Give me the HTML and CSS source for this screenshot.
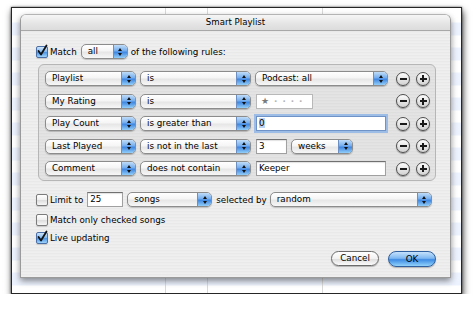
FILE: index.html
```html
<!DOCTYPE html>
<html lang="en">
<head>
    <meta charset="UTF-8">
    <title>Smart Playlist</title>
    <link rel="stylesheet" href="styles.css">
</head>
<body>
    <div class="window">
        <div class="sheet">
            <div class="titlebar">Smart Playlist</div>

            <div class="sheet-body">
                <div class="match-row">
                    <span class="check on"><svg viewBox="0 0 12 12" width="12" height="12"><path d="M2.5 6 L5 9.5 L10.5 0.5" /></svg></span>
                    <span class="label">Match</span>
                    <div class="popup w-all"><span class="popup-text">all</span><span class="popup-arrows"></span></div>
                    <span class="label after-popup">of the following rules:</span>
                </div>

                <div class="rules">
                    <div class="rule">
                        <div class="popup w-field"><span class="popup-text">Playlist</span><span class="popup-arrows"></span></div>
                        <div class="popup w-op"><span class="popup-text">is</span><span class="popup-arrows"></span></div>
                        <div class="value">
                            <div class="popup w-value"><span class="popup-text">Podcast: all</span><span class="popup-arrows"></span></div>
                        </div>
                        <div class="pm"><span class="round minus"></span><span class="round plus"></span></div>
                    </div>

                    <div class="rule">
                        <div class="popup w-field"><span class="popup-text">My Rating</span><span class="popup-arrows"></span></div>
                        <div class="popup w-op"><span class="popup-text">is</span><span class="popup-arrows"></span></div>
                        <div class="value">
                            <div class="rating"><span class="star">★</span><span class="dot">·</span><span class="dot">·</span><span class="dot">·</span><span class="dot">·</span></div>
                        </div>
                        <div class="pm"><span class="round minus"></span><span class="round plus"></span></div>
                    </div>

                    <div class="rule">
                        <div class="popup w-field"><span class="popup-text">Play Count</span><span class="popup-arrows"></span></div>
                        <div class="popup w-op"><span class="popup-text">is greater than</span><span class="popup-arrows"></span></div>
                        <div class="value">
                            <div class="field wide focused"><span class="selected">0</span></div>
                        </div>
                        <div class="pm"><span class="round minus"></span><span class="round plus"></span></div>
                    </div>

                    <div class="rule">
                        <div class="popup w-field"><span class="popup-text">Last Played</span><span class="popup-arrows"></span></div>
                        <div class="popup w-op"><span class="popup-text">is not in the last</span><span class="popup-arrows"></span></div>
                        <div class="value">
                            <div class="field short">3</div>
                            <div class="popup w-unit"><span class="popup-text">weeks</span><span class="popup-arrows"></span></div>
                        </div>
                        <div class="pm"><span class="round minus"></span><span class="round plus"></span></div>
                    </div>

                    <div class="rule">
                        <div class="popup w-field"><span class="popup-text">Comment</span><span class="popup-arrows"></span></div>
                        <div class="popup w-op"><span class="popup-text">does not contain</span><span class="popup-arrows"></span></div>
                        <div class="value">
                            <div class="field wide">Keeper</div>
                        </div>
                        <div class="pm"><span class="round minus"></span><span class="round plus"></span></div>
                    </div>
                </div>

                <div class="limit-row">
                    <span class="check"></span>
                    <span class="label">Limit to</span>
                    <div class="field limit">25</div>
                    <div class="popup w-songs"><span class="popup-text">songs</span><span class="popup-arrows"></span></div>
                    <span class="label sel-by">selected by</span>
                    <div class="popup w-random"><span class="popup-text">random</span><span class="popup-arrows"></span></div>
                </div>

                <div class="option-row first">
                    <span class="check"></span>
                    <span class="label">Match only checked songs</span>
                </div>

                <div class="option-row">
                    <span class="check on"><svg viewBox="0 0 12 12" width="12" height="12"><path d="M2.5 6 L5 9.5 L10.5 0.5" /></svg></span>
                    <span class="label">Live updating</span>
                </div>

                <div class="buttons">
                    <div class="btn">Cancel</div>
                    <div class="btn default">OK</div>
                </div>
            </div>
        </div>
    </div>
</body>
</html>
```

FILE: styles.css
```css
body {
    margin: 0;
    padding: 7px 0 0 11px;
    background: #fff;
    font-family: "DejaVu Sans", "Liberation Sans", sans-serif;
    font-size: 8.75px;
    color: #000;
}

/* iTunes window behind the sheet */
.window {
    width: 451px;
    height: 287px;
    box-sizing: border-box;
    border: 1px solid #262626;
    padding: 6px 0 0 8px;
    box-shadow: 1px 4px 7px rgba(0, 0, 0, 0.75), 0 0 2px rgba(0, 0, 0, 0.6);
    background:
        linear-gradient(#d9d9d9, #d9d9d9) 153px 0 / 1px 100% no-repeat,
        linear-gradient(#d9d9d9, #d9d9d9) 195px 0 / 1px 100% no-repeat,
        linear-gradient(#d9d9d9, #d9d9d9) 310px 0 / 1px 100% no-repeat,
        repeating-linear-gradient(#fff 0 12.5px, #edf3fe 12.5px 25px) 0 2.5px;
}

.sheet {
    width: 431px;
    height: 264px;
    box-sizing: border-box;
    border: 1px solid #9a9a9a;
    border-top-color: #b4b4b4;
    border-radius: 6px 6px 0 0;
    background: repeating-linear-gradient(#efefef 0 1px, #e9e9e9 1px 2px, #ededed 2px 3px);
    box-shadow: 0 3px 6px rgba(0, 0, 0, 0.45);
}

.titlebar {
    height: 15px;
    line-height: 15px;
    text-align: center;
    font-size: 8.6px;
    background: linear-gradient(#f6f6f6, #e4e4e4 60%, #dcdcdc);
    border-bottom: 1px solid #a8a8a8;
    border-radius: 5px 5px 0 0;
}

.sheet-body {
    padding: 13px 14px 0 15px;
}

.label {
    white-space: nowrap;
    margin-left: 2px;
}

/* match row */
.match-row,
.limit-row {
    display: flex;
    align-items: center;
    height: 15px;
}

.match-row .w-all {
    margin-left: 4px;
}

.after-popup {
    margin-left: 3px;
}

/* checkboxes */
.check {
    width: 12px;
    height: 12px;
    flex: none;
    box-sizing: border-box;
    border: 1px solid #7b7b7b;
    border-radius: 2px;
    background: linear-gradient(#fff, #eeeeee 50%, #dcdcdc 52%, #f7f7f7);
    box-shadow: 0 1px 1px rgba(0, 0, 0, 0.15);
    display: flex;
}

.check.on {
    border-color: #4a6ea6;
    background: linear-gradient(#cfe5fb, #7fb7ef 48%, #4a92e4 52%, #9ed4fb);
}

.check svg {
    margin: -2px 0 0 -1px;
    overflow: visible;
}

.check path {
    fill: none;
    stroke: #111;
    stroke-width: 1.8;
    stroke-linecap: round;
    stroke-linejoin: round;
}

/* popup menus */
.popup {
    display: flex;
    flex: none;
    height: 15px;
    box-sizing: border-box;
    border: 1px solid #8c8c8c;
    border-radius: 5px;
    overflow: hidden;
    background: linear-gradient(#fff, #f5f5f5 45%, #e6e6e6 55%, #f7f7f7);
    box-shadow: 0 1px 1px rgba(0, 0, 0, 0.2);
}

.popup-text {
    flex: 1;
    padding-left: 6px;
    line-height: 13px;
    white-space: nowrap;
}

.popup-arrows {
    width: 13px;
    border-left: 1px solid #6b8fc3;
    background: linear-gradient(#c0dcf8, #74adee 45%, #3f86e0 55%, #92cdf9);
    display: flex;
    flex-direction: column;
    align-items: center;
    justify-content: center;
    gap: 2px;
}

.popup-arrows::before,
.popup-arrows::after {
    content: "";
    border-left: 2.5px solid transparent;
    border-right: 2.5px solid transparent;
}

.popup-arrows::before {
    border-bottom: 3px solid #111;
}

.popup-arrows::after {
    border-top: 3px solid #111;
}

.w-all { width: 47px; }
.w-field { width: 91px; }
.w-op { width: 111px; margin-left: 4px; }
.w-value { width: 133px; }
.w-unit { width: 62px; margin-left: 4px; }
.w-songs { width: 85px; margin-left: 4px; }
.w-random { width: 162px; margin-left: 3px; }

/* rules box */
.rules {
    width: 398px;
    height: 117px;
    box-sizing: border-box;
    margin: 5px 0 0 2px;
    padding: 6px 5px 0 6px;
    border: 1px solid #b6b6b6;
    border-radius: 6px;
    background: rgba(0, 0, 0, 0.045);
    display: flex;
    flex-direction: column;
    gap: 7.5px;
}

.rule {
    display: flex;
    align-items: center;
    height: 15px;
}

.value {
    width: 133px;
    margin-left: 4px;
    display: flex;
    align-items: center;
}

/* text fields */
.field {
    height: 15px;
    box-sizing: border-box;
    border: 1px solid #a0a0a0;
    border-top-color: #707070;
    background: #fff;
    box-shadow: inset 0 1px 1px rgba(0, 0, 0, 0.12);
    padding-left: 2px;
    line-height: 13px;
    white-space: nowrap;
}

.field.wide {
    width: 130px;
    margin-left: 1px;
}

.field.short {
    width: 31px;
    margin-left: 1px;
}

.field.limit {
    width: 36px;
    margin-left: 4px;
}

.field.focused {
    border-color: #6f93c6;
    box-shadow: 0 0 0 2px #9dbde6;
}

.selected {
    background: #b7d4f7;
}

.rating {
    width: 57px;
    height: 15px;
    box-sizing: border-box;
    margin-left: 1px;
    border: 1px solid #b8b8b8;
    background: #fff;
    display: flex;
    align-items: center;
    gap: 5px;
    padding-left: 4px;
    line-height: 13px;
}

.star {
    color: #7a7a7a;
    font-size: 9px;
}

.dot {
    color: #b5b5b5;
    font-weight: bold;
}

/* minus / plus */
.pm {
    display: flex;
    gap: 6px;
    margin-left: 8px;
}

.round {
    width: 14px;
    height: 14px;
    box-sizing: border-box;
    border: 1.5px solid #4d4d4d;
    border-radius: 50%;
    background: linear-gradient(#fdfdfd, #e6e6e6 50%, #d2d2d2);
    box-shadow: 0 1px 1px rgba(0, 0, 0, 0.35);
    display: grid;
    place-items: center;
}

.round::before,
.round::after {
    grid-area: 1 / 1;
}

.round::before {
    content: "";
    width: 7px;
    height: 2px;
    background: #1a1a1a;
}

.plus::after {
    content: "";
    width: 2px;
    height: 7px;
    background: #1a1a1a;
}

/* limit + options */
.limit-row {
    margin-top: 11px;
}

.sel-by {
    margin-left: 4px;
}

.option-row {
    display: flex;
    align-items: center;
    height: 12px;
    margin-top: 6px;
}

.option-row.first {
    margin-top: 7px;
}

/* buttons */
.buttons {
    display: flex;
    justify-content: flex-end;
    align-items: flex-start;
    gap: 9px;
    margin-top: 7px;
}

.btn {
    width: 48px;
    height: 15px;
    box-sizing: border-box;
    border: 1px solid #6b6b6b;
    border-radius: 8px;
    background: linear-gradient(#fff, #f2f2f2 50%, #dedede 55%, #fbfbfb);
    box-shadow: 0 1px 1px rgba(0, 0, 0, 0.25);
    text-align: center;
    line-height: 13px;
}

.btn.default {
    height: 16px;
    line-height: 14px;
    border-color: #2f5f9e;
    background: linear-gradient(#c6e1fb, #7db7f2 45%, #3d8be4 55%, #92d2fb);
}
```
